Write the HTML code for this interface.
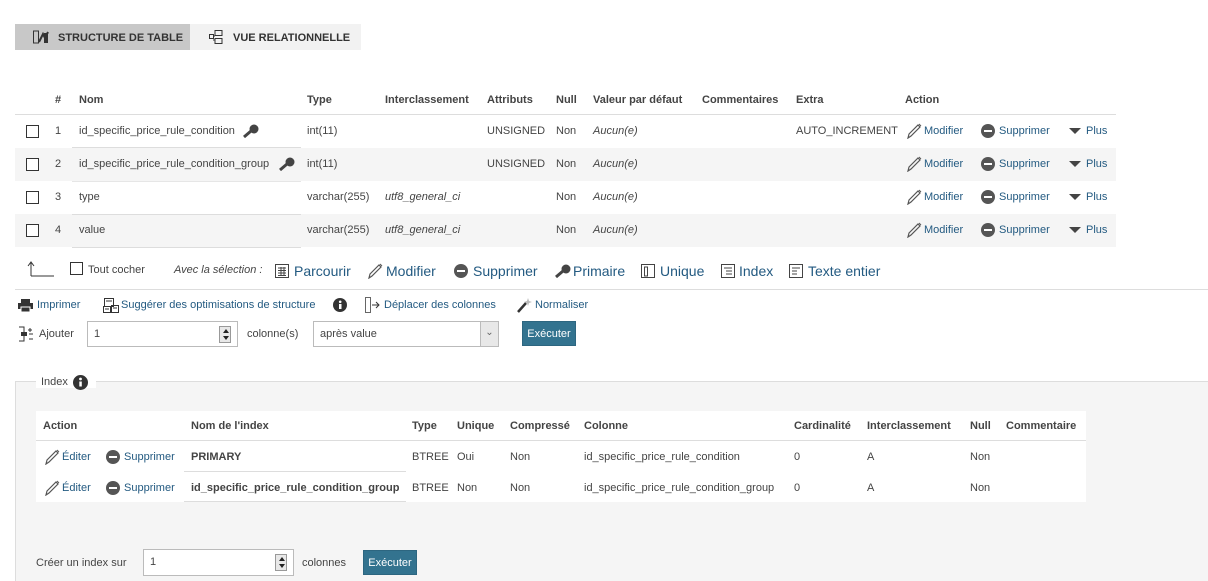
<!DOCTYPE html>
<html><head><meta charset="utf-8"><style>
*{margin:0;padding:0;box-sizing:border-box}
body{width:1208px;height:576px;overflow:hidden;background:#fff;font-family:"Liberation Sans",sans-serif;font-size:11px;color:#444;position:relative}
.a{position:absolute;line-height:14px;white-space:nowrap}
.b{font-weight:bold}
.i{font-style:italic}
.l{color:#235a81}
.bg{position:absolute}
.cb{position:absolute;width:13px;height:13px;border:1px solid #333;background:#fff}
.btn{position:absolute;background:#33738f;color:#fff;font-size:11px;line-height:25px;text-align:center;border:1px solid #2d6680}
.inp{position:absolute;border:1px solid #bbb;background:#fff;font-size:11px;padding-left:6px;line-height:24px;color:#444}
.spin{position:absolute;right:6px;top:4px;width:12px;height:17px;border:1px solid #999;background:#e8e8e8}
.spin:before{content:"";position:absolute;left:3px;top:2px;border:3px solid transparent;border-bottom:4px solid #222;border-top:0}
.spin:after{content:"";position:absolute;left:3px;bottom:2px;border:3px solid transparent;border-top:4px solid #222;border-bottom:0}
.sup{display:inline-block;width:14px;height:14px;border-radius:50%;background:#555;position:absolute}
.sup:after{content:"";position:absolute;left:3px;right:3px;top:6px;height:2px;background:#fff}
.tri{position:absolute;border:6px solid transparent;border-top:6px solid #444;border-bottom:0}
</style></head><body>
<!-- tabs -->
<div class="bg" style="left:15px;top:24px;width:175px;height:26px;background:#c8c8c8"></div>
<div class="bg" style="left:190px;top:24px;width:171px;height:26px;background:#f2f2f2"></div>
<svg class="bg" style="left:33px;top:30px" width="16" height="14"><rect x="0.5" y="1" width="5" height="12" fill="none" stroke="#333"/><path d="M6 12 L10 4 L12 8 L15 2" stroke="#333" stroke-width="2" fill="none"/><rect x="11" y="3" width="4" height="10" fill="#333"/></svg>
<span class="a b" style="left:58px;top:31px;color:#333">STRUCTURE DE TABLE</span>
<svg class="bg" style="left:209px;top:30px" width="14" height="14"><rect x="6" y="0.5" width="7" height="5" fill="none" stroke="#333"/><rect x="6" y="8.5" width="7" height="5" fill="none" stroke="#333"/><rect x="0.5" y="4.5" width="4" height="4" fill="none" stroke="#333"/><path d="M4 6H6M4 10H6" stroke="#333"/></svg>
<span class="a b" style="left:233px;top:31px;color:#333">VUE RELATIONNELLE</span>

<!-- structure table -->
<div class="bg" style="left:15px;top:114px;width:1101px;height:1px;background:#ddd"></div>
<div class="bg" style="left:15px;top:148px;width:1101px;height:33px;background:#f5f5f5"></div>
<div class="bg" style="left:15px;top:214px;width:1101px;height:33px;background:#f5f5f5"></div>
<div class="bg" style="left:72px;top:147px;width:229px;height:1px;background:#ddd"></div>
<div class="bg" style="left:72px;top:181px;width:229px;height:1px;background:#e6e6e6"></div>
<div class="bg" style="left:72px;top:214px;width:229px;height:1px;background:#ddd"></div>
<div class="bg" style="left:72px;top:247px;width:229px;height:1px;background:#ddd"></div>
<span class="a b" style="left:55px;top:93px">#</span>
<span class="a b" style="left:79px;top:93px">Nom</span>
<span class="a b" style="left:307px;top:93px">Type</span>
<span class="a b" style="left:385px;top:93px">Interclassement</span>
<span class="a b" style="left:487px;top:93px">Attributs</span>
<span class="a b" style="left:556px;top:93px">Null</span>
<span class="a b" style="left:593px;top:93px">Valeur par défaut</span>
<span class="a b" style="left:702px;top:93px">Commentaires</span>
<span class="a b" style="left:796px;top:93px">Extra</span>
<span class="a b" style="left:905px;top:93px">Action</span>

<div class="cb" style="left:26px;top:125px"></div><div class="cb" style="left:26px;top:158px"></div><div class="cb" style="left:26px;top:191px"></div><div class="cb" style="left:26px;top:224px"></div>
<span class="a" style="left:55px;top:124px">1</span><span class="a" style="left:55px;top:157px">2</span><span class="a" style="left:55px;top:190px">3</span><span class="a" style="left:55px;top:223px">4</span>
<span class="a" style="left:79px;top:124px">id_specific_price_rule_condition</span>
<span class="a" style="left:79px;top:157px">id_specific_price_rule_condition_group</span>
<span class="a" style="left:79px;top:190px">type</span>
<span class="a" style="left:79px;top:223px">value</span>
<svg class="bg" style="left:243px;top:124px" width="16" height="14"><circle cx="11" cy="5" r="4.5" fill="#444"/><path d="M8 7 L1 13" stroke="#444" stroke-width="3"/></svg>
<svg class="bg" style="left:279px;top:157px" width="16" height="14"><circle cx="11" cy="5" r="4.5" fill="#444"/><path d="M8 7 L1 13" stroke="#444" stroke-width="3"/></svg>
<span class="a" style="left:307px;top:124px">int(11)</span><span class="a" style="left:307px;top:157px">int(11)</span>
<span class="a" style="left:307px;top:190px">varchar(255)</span><span class="a" style="left:307px;top:223px">varchar(255)</span>
<span class="a i" style="left:385px;top:190px">utf8_general_ci</span><span class="a i" style="left:385px;top:223px">utf8_general_ci</span>
<span class="a" style="left:487px;top:124px">UNSIGNED</span><span class="a" style="left:487px;top:157px">UNSIGNED</span>
<span class="a" style="left:556px;top:124px">Non</span><span class="a" style="left:556px;top:157px">Non</span><span class="a" style="left:556px;top:190px">Non</span><span class="a" style="left:556px;top:223px">Non</span>
<span class="a i" style="left:593px;top:124px">Aucun(e)</span><span class="a i" style="left:593px;top:157px">Aucun(e)</span><span class="a i" style="left:593px;top:190px">Aucun(e)</span><span class="a i" style="left:593px;top:223px">Aucun(e)</span>
<span class="a" style="left:796px;top:124px">AUTO_INCREMENT</span>

<!-- actions per row -->
<svg width="0" height="0" style="position:absolute"><defs><g id="pen"><path d="M2 15 L3 11 L12 2 L14 4 L5 13 Z" fill="none" stroke="#555" stroke-width="1.2"/><path d="M13 1 L15 3" stroke="#555"/></g></defs></svg>
<svg class="bg" style="left:906px;top:123px" width="16" height="16"><use href="#pen"/></svg><span class="a l" style="left:924px;top:124px">Modifier</span>
<span class="sup" style="left:981px;top:124px"></span><span class="a l" style="left:999px;top:124px">Supprimer</span>
<span class="tri" style="left:1069px;top:128px"></span><span class="a l" style="left:1086px;top:124px">Plus</span>
<svg class="bg" style="left:906px;top:156px" width="16" height="16"><use href="#pen"/></svg><span class="a l" style="left:924px;top:157px">Modifier</span>
<span class="sup" style="left:981px;top:157px"></span><span class="a l" style="left:999px;top:157px">Supprimer</span>
<span class="tri" style="left:1069px;top:161px"></span><span class="a l" style="left:1086px;top:157px">Plus</span>
<svg class="bg" style="left:906px;top:189px" width="16" height="16"><use href="#pen"/></svg><span class="a l" style="left:924px;top:190px">Modifier</span>
<span class="sup" style="left:981px;top:190px"></span><span class="a l" style="left:999px;top:190px">Supprimer</span>
<span class="tri" style="left:1069px;top:194px"></span><span class="a l" style="left:1086px;top:190px">Plus</span>
<svg class="bg" style="left:906px;top:222px" width="16" height="16"><use href="#pen"/></svg><span class="a l" style="left:924px;top:223px">Modifier</span>
<span class="sup" style="left:981px;top:223px"></span><span class="a l" style="left:999px;top:223px">Supprimer</span>
<span class="tri" style="left:1069px;top:227px"></span><span class="a l" style="left:1086px;top:223px">Plus</span>

<!-- bulk row -->
<svg class="bg" style="left:27px;top:261px" width="28" height="16"><path d="M4 15 V2 M1 5 L4 1 L7 5 M4 15 H27" stroke="#333" fill="none"/></svg>
<div class="cb" style="left:70px;top:262px"></div>
<span class="a" style="left:88px;top:263px">Tout cocher</span>
<span class="a i" style="left:174px;top:263px">Avec la sélection :</span>
<svg class="bg" style="left:275px;top:264px" width="14" height="14"><rect x="0.5" y="0.5" width="13" height="13" fill="none" stroke="#444"/><path d="M3 4H11M3 6.5H11M3 9H11M3 11.5H11M6 3V12M9 3V12" stroke="#444"/></svg>
<span class="a l" style="left:294px;top:263px;font-size:14px;line-height:16px">Parcourir</span>
<svg class="bg" style="left:367px;top:263px" width="16" height="16"><use href="#pen"/></svg><span class="a l" style="left:386px;top:263px;font-size:14px;line-height:16px">Modifier</span>
<span class="sup" style="left:454px;top:264px"></span><span class="a l" style="left:473px;top:263px;font-size:14px;line-height:16px">Supprimer</span>
<svg class="bg" style="left:555px;top:264px" width="16" height="14"><circle cx="11" cy="5" r="4.5" fill="#444"/><path d="M8 7 L1 13" stroke="#444" stroke-width="3"/></svg><span class="a l" style="left:573px;top:263px;font-size:14px;line-height:16px">Primaire</span>
<svg class="bg" style="left:641px;top:264px" width="14" height="14"><rect x="0.5" y="0.5" width="13" height="13" fill="none" stroke="#444"/><rect x="3.5" y="3" width="3" height="9" fill="none" stroke="#444"/></svg><span class="a l" style="left:660px;top:263px;font-size:14px;line-height:16px">Unique</span>
<svg class="bg" style="left:721px;top:264px" width="14" height="14"><rect x="0.5" y="0.5" width="13" height="13" fill="none" stroke="#444"/><path d="M3 4H11M5 7H11M5 10H11" stroke="#444"/></svg><span class="a l" style="left:739px;top:263px;font-size:14px;line-height:16px">Index</span>
<svg class="bg" style="left:789px;top:264px" width="14" height="14"><rect x="0.5" y="0.5" width="13" height="13" fill="none" stroke="#444"/><path d="M3 4H11M3 7H8M3 10H8" stroke="#444"/></svg><span class="a l" style="left:808px;top:263px;font-size:14px;line-height:16px">Texte entier</span>
<div class="bg" style="left:15px;top:289px;width:1193px;height:1px;background:#ddd"></div>

<!-- tools -->
<svg class="bg" style="left:18px;top:299px" width="15" height="13"><rect x="3" y="0" width="9" height="4" fill="#333"/><rect x="0" y="4" width="15" height="6" fill="#333"/><rect x="3" y="8" width="9" height="5" fill="#333" stroke="#fff"/></svg>
<span class="a l" style="left:37px;top:298px">Imprimer</span>
<svg class="bg" style="left:103px;top:297px" width="16" height="16"><rect x="1.5" y="1.5" width="9" height="8" fill="none" stroke="#333"/><rect x="0.5" y="9.5" width="7" height="6" fill="none" stroke="#333"/><rect x="8.5" y="8.5" width="7" height="7" fill="none" stroke="#333"/><path d="M3 4H9M10 11H14M2 12H6" stroke="#333"/></svg>
<span class="a l" style="left:121px;top:298px">Suggérer des optimisations de structure</span>
<svg class="bg" style="left:333px;top:298px" width="14" height="14"><circle cx="7" cy="7" r="7" fill="#333"/><rect x="6" y="6" width="2.5" height="5" fill="#fff"/><circle cx="7.2" cy="3.8" r="1.3" fill="#fff"/></svg>
<svg class="bg" style="left:365px;top:297px" width="15" height="16"><rect x="0.5" y="0.5" width="5" height="15" fill="none" stroke="#666"/><path d="M7 8 H14 M11 5 L14 8 L11 11" stroke="#333" fill="none"/></svg>
<span class="a l" style="left:384px;top:298px">Déplacer des colonnes</span>
<svg class="bg" style="left:517px;top:297px" width="15" height="16"><path d="M1 15 L9 6" stroke="#333" stroke-width="2.5"/><path d="M11 1 L12 4 L15 5 L12 6 L11 9 L10 6 L7 5 L10 4Z" fill="#bbb"/></svg>
<span class="a l" style="left:535px;top:298px">Normaliser</span>

<svg class="bg" style="left:18px;top:326px" width="17" height="16"><path d="M1 1H6V15H1M6 5V11" stroke="#333" fill="none"/><rect x="3" y="6" width="6" height="4" fill="#333"/><path d="M12 2V6M10 4H14M11 8H15M11 13H15" stroke="#333"/></svg>
<span class="a" style="left:39px;top:327px">Ajouter</span>
<div class="inp" style="left:87px;top:321px;width:151px;height:26px">1<div class="spin"></div></div>
<span class="a" style="left:247px;top:327px">colonne(s)</span>
<div class="inp" style="left:313px;top:321px;width:186px;height:26px">après value<div style="position:absolute;right:0;top:0;width:18px;height:24px;background:#e8e8e8;border-left:1px solid #bbb;text-align:center;line-height:22px;font-size:10px;color:#666">&#8964;</div></div>
<div class="btn" style="left:522px;top:321px;width:54px;height:25px">Exécuter</div>

<!-- index fieldset -->
<div class="bg" style="left:15px;top:381px;width:1200px;height:200px;background:#f5f5f5;border-top:1px solid #ddd;border-left:1px solid #ddd"></div>
<div class="bg" style="left:36px;top:376px;width:60px;height:12px;background:#fff"></div>
<span class="a" style="left:41px;top:375px">Index</span>
<svg class="bg" style="left:73px;top:375px" width="15" height="15"><circle cx="7.5" cy="7.5" r="7.5" fill="#333"/><rect x="6.3" y="6.5" width="2.5" height="5" fill="#fff"/><circle cx="7.5" cy="4" r="1.4" fill="#fff"/></svg>

<div class="bg" style="left:36px;top:411px;width:1050px;height:91px;background:#fff"></div>
<div class="bg" style="left:36px;top:440px;width:1050px;height:1px;background:#ddd"></div>
<div class="bg" style="left:184px;top:471px;width:222px;height:1px;background:#ddd"></div>
<div class="bg" style="left:184px;top:501px;width:222px;height:1px;background:#ddd"></div>
<span class="a b" style="left:43px;top:419px">Action</span>
<span class="a b" style="left:191px;top:419px">Nom de l'index</span>
<span class="a b" style="left:412px;top:419px">Type</span>
<span class="a b" style="left:457px;top:419px">Unique</span>
<span class="a b" style="left:510px;top:419px">Compressé</span>
<span class="a b" style="left:584px;top:419px">Colonne</span>
<span class="a b" style="left:794px;top:419px">Cardinalité</span>
<span class="a b" style="left:867px;top:419px">Interclassement</span>
<span class="a b" style="left:970px;top:419px">Null</span>
<span class="a b" style="left:1006px;top:419px">Commentaire</span>

<svg class="bg" style="left:44px;top:449px" width="16" height="16"><use href="#pen"/></svg><span class="a l" style="left:62px;top:450px">Éditer</span>
<span class="sup" style="left:106px;top:450px"></span><span class="a l" style="left:124px;top:450px">Supprimer</span>
<span class="a b" style="left:191px;top:450px">PRIMARY</span>
<span class="a" style="left:412px;top:450px">BTREE</span><span class="a" style="left:457px;top:450px">Oui</span><span class="a" style="left:510px;top:450px">Non</span>
<span class="a" style="left:584px;top:450px">id_specific_price_rule_condition</span><span class="a" style="left:794px;top:450px">0</span><span class="a" style="left:867px;top:450px">A</span><span class="a" style="left:970px;top:450px">Non</span>

<svg class="bg" style="left:44px;top:480px" width="16" height="16"><use href="#pen"/></svg><span class="a l" style="left:62px;top:481px">Éditer</span>
<span class="sup" style="left:106px;top:481px"></span><span class="a l" style="left:124px;top:481px">Supprimer</span>
<span class="a b" style="left:191px;top:481px">id_specific_price_rule_condition_group</span>
<span class="a" style="left:412px;top:481px">BTREE</span><span class="a" style="left:457px;top:481px">Non</span><span class="a" style="left:510px;top:481px">Non</span>
<span class="a" style="left:584px;top:481px">id_specific_price_rule_condition_group</span><span class="a" style="left:794px;top:481px">0</span><span class="a" style="left:867px;top:481px">A</span><span class="a" style="left:970px;top:481px">Non</span>

<span class="a" style="left:36px;top:556px">Créer un index sur</span>
<div class="inp" style="left:143px;top:549px;width:151px;height:27px;line-height:25px">1<div class="spin"></div></div>
<span class="a" style="left:302px;top:556px">colonnes</span>
<div class="btn" style="left:363px;top:550px;width:54px;height:25px">Exécuter</div>
</body></html>
